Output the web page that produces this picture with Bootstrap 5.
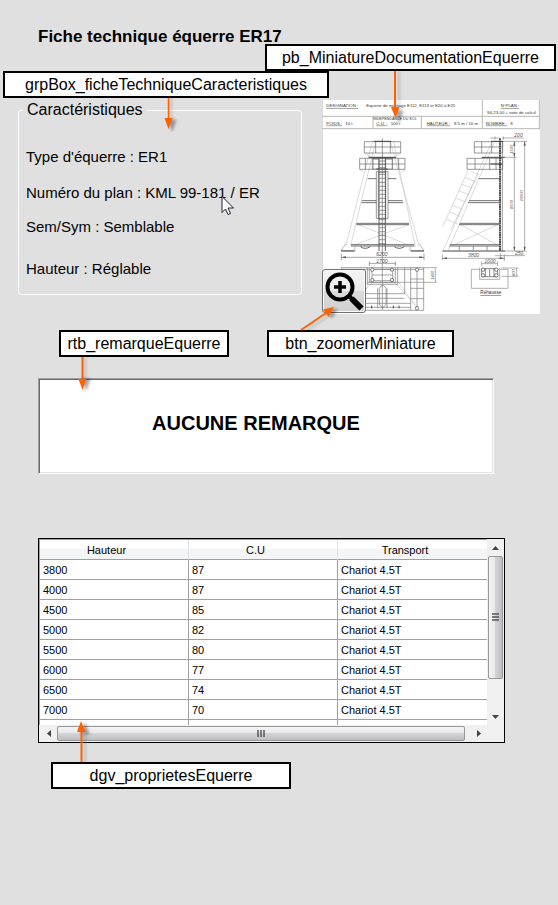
<!DOCTYPE html>
<html lang="fr">
<head>
<meta charset="utf-8">
<meta name="viewport" content="width=device-width, initial-scale=1">
<title>Fiche technique équerre ER17</title>
<link rel="stylesheet" href="https://cdn.jsdelivr.net/npm/bootstrap@5.3.0/dist/css/bootstrap.min.css">
<style>
body{background:#e0e0e0;color:#000;font:15px/20px "Liberation Sans",Arial,sans-serif}
.sheet{padding:25px 18px}
.title{font-size:17px;line-height:24px;font-weight:700;margin:0 0 51px;padding-left:20px}
.details{gap:20px}
.group{border:1px solid #fbfcfe;border-radius:3px;padding:0 7px 15px}
.group legend{float:none;width:auto;font-size:16px;line-height:20px;margin:0 0 0 -3px;padding:0 4px}
.group p{margin:16px 0 0}
.group p.first{margin-top:27px}
.group p.third{margin-top:14px}
.group p.last{margin-top:22px}
.pointer{left:221px;top:195px}
.preview{width:218px;flex:none;margin:0}
.zoomer{left:0;bottom:1px;width:44px;height:44px;border:1px solid #707070;border-radius:3px;background:linear-gradient(#f3f3f3,#ebebeb 50%,#dcdcdc 50%,#cfcfcf);box-shadow:inset 0 0 0 1px #fafafa}
.tag{border:2px solid #000;background:#fff;font-size:16px;line-height:23px;text-align:center;position:relative;white-space:nowrap}
.tag svg{position:absolute;overflow:visible}
.tag-group{position:absolute;left:3px;top:71px;width:326px;z-index:2}
.tag-picture{position:absolute;right:2px;top:44px;width:291px;z-index:2}
.tag-note{width:170px}
.tag-zoom{width:187px}
.tag-grid{width:240px;margin:19px 0 0 33px}
.down{top:100%}
.tags{gap:38px;padding-left:41px;margin-top:16px}
.a-group{left:155px}.a-picture{left:120px}.a-note{left:13px}
.a-zoom{left:24px;bottom:100%}.a-grid{left:20px;bottom:100%}
.note{display:block;width:calc(100% - 66px);height:96px;margin:21px 0 0 20px;border:1px solid;border-color:#a0a0a0 #fff #fff #a0a0a0;box-shadow:inset 1px 1px #696969,inset -1px -1px #e3e3e3;border-radius:0;background:#fff;color:#000;font-size:20px;line-height:24px;font-weight:700;text-align:center;padding:32px 20px 0 0;resize:none;overflow:hidden;outline:0}
.grid-box{margin:64px 35px 0 20px;border:1px solid #000;background:#f0f0f0;font-size:11px}
.viewport{height:186px;overflow:hidden;background:#fff;border-top:1px solid #a0a0a0;border-left:1px solid #a0a0a0}
.data{width:100%;table-layout:fixed;border-collapse:separate;border-spacing:0;line-height:18px}
.data th,.data td{height:20px;padding:1px 3px 0;border-right:1px solid #a0a0a0;border-bottom:1px solid #a0a0a0}
.data th{font-weight:400;text-align:center;padding-right:18px;border-right-color:#e0e2e5;background:linear-gradient(#fff 50%,#f3f4f6 50%,#f5f6f8)}
.data th:last-child,.data td:last-child{border-right:0}
.bar{background:#f0f0f0}
.bar button{border:0;padding:0;background:none;width:17px;height:17px;flex:none;display:flex;align-items:center;justify-content:center}
.vbar{width:17px;flex:none;padding-left:1px}
.bar.vbar button{width:15px}
.vthumb{width:15px;height:123px;border:1px solid #979797;border-radius:2px;background:linear-gradient(90deg,#f5f5f5,#e8e8eb 45%,#d3d4d7 50%,#bdbec1)}
.hthumb{flex:1 1 0;height:15px;border:1px solid #979797;border-radius:2px;background:linear-gradient(#f5f5f5,#e8e8eb 45%,#d3d4d7 50%,#bdbec1)}
.hbar{padding:0 17px 0 1px;height:17px}
.hgap{width:5px}
</style>
<script src="https://cdn.jsdelivr.net/npm/bootstrap@5.3.0/dist/js/bootstrap.bundle.min.js"></script>
</head>
<body>
<main class="sheet position-relative">
  <h1 class="title">Fiche technique équerre ER17</h1>
  <div class="tag tag-picture">pb_MiniatureDocumentationEquerre
    <svg class="down a-picture" width="18" height="52" aria-hidden="true"><g filter="url(#soft)" opacity=".35"><path d="M12 2V42M8 42h8l-4 11z" fill="#000" stroke="#000"/></g><path d="M8 2V40" stroke="#ff6000" stroke-width="2"/><path d="M4 38h8.500L8.500 49z" fill="#ff6000"/></svg>
  </div>
  <div class="tag tag-group">grpBox_ficheTechniqueCaracteristiques
    <svg class="down a-group" width="18" height="36" aria-hidden="true"><defs><filter id="soft" x="-50%" y="-20%" width="200%" height="140%"><feGaussianBlur stdDeviation="1.500"/></filter></defs><g filter="url(#soft)" opacity=".35"><path d="M11 2V24M8 24h8l-4 11z" fill="#000" stroke="#000"/></g><path d="M8.500 2V24" stroke="#ff6000" stroke-width="1.500"/><path d="M4.500 22h8L8.500 33z" fill="#ff6000"/></svg>
  </div>

  <div class="details d-flex align-items-start">
    <fieldset class="group flex-fill">
      <legend>Caractéristiques</legend>
      <p class="first">Type d'équerre : ER1</p>
      <p>Numéro du plan : KML 99-181 / ER</p>
      <p class="third">Sem/Sym : Semblable</p>
      <p class="last">Hauteur : Réglable</p>
    </fieldset>
    <figure class="preview position-relative">
      <svg class="d-block w-100" viewBox="21 15 654 642" role="img" aria-label="Plan de l'équerre de montage" fill="none" stroke="#777" stroke-width="2" font-family="Liberation Sans, Arial, sans-serif">
        <path d="M21 15h654v642H21z" fill="#fff" stroke="none"/>
        <path d="M22 15V657" stroke="#bbb"/>
        <path d="M21 64H675M21 101H675M502 15V101M174 64V101M319 64V101M673 15V101" stroke="#aaa" stroke-width="2.500"/>
        <g fill="#333" stroke="none" font-size="13">
          <text x="34" y="36" text-decoration="underline">DESIGNATION :</text><text x="154" y="36">Equerre de montage E112, E113 et E20 à E25</text>
          <text x="557" y="36" text-decoration="underline">N°PLAN :</text><text x="516" y="56">94-23-00 + note de calcul</text>
          <text x="34" y="89" text-decoration="underline">POIDS :</text><text x="91" y="89">10 t</text>
          <text x="174" y="76" font-size="11">INDEPENDANCE DU SOL</text>
          <text x="184" y="89" text-decoration="underline">C.U. :</text><text x="227" y="89">100 t</text>
          <text x="335" y="89" text-decoration="underline">HAUTEUR :</text><text x="417" y="89">8.5 m / 10 m</text>
          <text x="512" y="89" text-decoration="underline">NOMBRE :</text><text x="586" y="89">8</text>
        </g>
        <!-- front view -->
        <g stroke="#c8c8c8"><path d="M172 140L92 455M182 140L106 455M226 140L313 455M236 140L301 455M134 223l12 10M270 223l-12 10M148 174l20 12M257 174l-20 12M130 389L280 450M280 389L118 450"/></g>
        <g stroke="#666"><path d="M148 140h109v34H148zM134 190h136v33H134zM134 207H270M148 156h109M182 140v34M226 140v34M202 130V480M174 190v33M232 190v33M151 190v33M251 190v33"/>
        <path d="M176 139h53M161 187h82M172 189h62M184 222h34" stroke="#444" stroke-width="3"/>
        <path d="M172 193h20v29h-20zM212 193h20v29h-20z" stroke-width="1.500"/>
        <path d="M184 230h35v141h-35zM190 232h22v138h-22z"/>
        <path d="M192 190v278M211 190v278" stroke="#444" stroke-width="2.500"/>
        <path d="M192 198h19M192 208h19M192 218h19M192 238h19M192 250h19M192 262h19M192 274h19M192 286h19M192 298h19M192 310h19M192 322h19M192 334h19M192 346h19M192 358h19M192 374h19M192 386h19M192 398h19M192 410h19M192 422h19M192 434h19M192 446h19"/>
        <path d="M158 251h26M219 251h25M141 317h43M219 317h44M139 323h45M219 323h46M124 385h158M124 389h158M108 449h190M108 453h190" stroke="#555" stroke-width="2.500"/>
        <path d="M92 446l-14 21h42V454M313 446l14 21h-42V454" stroke="#999"/>
        <path d="M78 468h41M288 468h39" stroke="#444" stroke-width="3"/><path d="M136 455q14 10 30 0M238 455q14 10 30 0" stroke-width="3"/>
        <path d="M79 476v20M327 476v20M79 487H327M163 499v14M241 499v14M163 505h78M202 470v174" stroke="#777"/></g>
        <!-- side view -->
        <g stroke="#c8c8c8"><path d="M528 145L385 465M537 145L400 465M459 227L383 395M490 237L407 405M450 247l32 13M440 267l32 13M431 287l32 13M422 309l32 13M413 331l32 13M404 351l32 13M395 373l32 13M437 389l110 61M548 389l-132 61M468 229l24 10"/></g>
        <g stroke="#666"><path d="M478 140h85v34h-85zM456 190h107v33H456zM456 207H563M478 156h85M500 140v34M530 140v34M480 190v33M524 190v33M543 190v33"/>
        <path d="M528 139h38M500 187h70M526 207h37" stroke="#444" stroke-width="3"/>
        <path d="M555 130V468" stroke="#333" stroke-width="5" stroke-dasharray="6 1"/><path d="M562 140V468"/>
        <path d="M491 251h64M462 317h92M459 323h95M434 385h120M432 389h122M405 449h150M403 453h152" stroke="#555" stroke-width="2.500"/>
        <path d="M382 468h188" stroke="#444" stroke-width="3"/><path d="M433 453v14M475 453v14M516 453v14"/>
        <path d="M526 129h28M562 129h64M540 124v10M565 124v10M598 138V468M629 138V468M570 187h34M566 139h70M570 468h65M382 478v18M382 490h188M568 478v20M540 482h90M556 475v15" stroke="#888"/></g>
        <g fill="#555" stroke="none"><path d="M79 487l14-3v6zM327 487l-14-3v6zM382 490l14-3v6zM568 490l-14-3v6zM598 139l-3 13h6zM598 187l-3-13h6zM598 468l-3-13h6zM629 139l-3 13h6zM629 468l-3-13h6z"/></g>
        <g fill="#555" stroke="none" font-size="15" font-style="italic">
          <text x="184" y="484">6200</text><text x="184" y="503">1700</text><text x="459" y="486">3800</text><text x="598" y="127">200</text><text x="600" y="481">250</text><text x="508" y="503">1000</text>
          <text transform="translate(594 176) rotate(-90)" font-size="12">1500</text><text transform="translate(594 342) rotate(-90)" font-size="12">8500</text><text transform="translate(625 319) rotate(-90)" font-size="12">10000</text><text transform="translate(356 554) rotate(-90)" font-size="12">1400</text><text transform="translate(601 543) rotate(-90)" font-size="12">800</text>
        </g>
        <!-- plan view -->
        <g stroke="#ccc"><path d="M241 565l70 75M170 565l-60 60M250 560l55 80M160 570l-30 60"/></g>
        <g stroke="#777"><path d="M79 518h248M79 523h248M79 518v8M157 518v50h91v-50M163 520v42h78v-42M171 523h62v34h-62zM171 540h62M287 518v128h39V518M287 552h39M287 580h39M287 611h39M306 523v115M269 518v78H150M150 610h118M150 625h137M150 637h137M150 646h137M188 580v60M216 580v60M193 580q10-18 20 0v48q-10 18-20 0zM157 562h91"/>
        <path d="M248 562h118M327 518h39M361 520v42" stroke="#888"/>
        <path d="M170 632v8M235 632v8M252 632v8" stroke="#444" stroke-width="3"/>
        <g fill="#fff" stroke="#444"><circle cx="172" cy="524" r="5"/><circle cx="231" cy="524" r="5"/><circle cx="172" cy="555" r="5"/><circle cx="231" cy="555" r="5"/><circle cx="306" cy="524" r="5"/><circle cx="306" cy="640" r="5"/></g></g>
        <!-- riser -->
        <g stroke="#888"><path d="M494 523h-25v57h110v-57h-25M494 518v35h60v-35M500 499v14M548 499v14M500 506h48M560 519h50M560 544h50M605 519v25"/><path d="M500 521h48v24h-48zM511 521v24M537 521v24M524 523v20" stroke="#444"/><g fill="#fff" stroke="#444"><circle cx="504" cy="524" r="5"/><circle cx="544" cy="524" r="5"/><circle cx="504" cy="541" r="5"/><circle cx="544" cy="541" r="5"/></g></g>
        <text x="496" y="598" font-size="14" fill="#333" stroke="none" text-decoration="underline">Réhausse</text>
      </svg>
      <button class="zoomer position-absolute p-0 d-flex align-items-center justify-content-center" type="button" aria-label="Zoomer la miniature">
        <svg width="40" height="40" viewBox="0 0 40 40" fill="none" stroke="#000"><circle cx="16" cy="16" r="12.500" stroke-width="4"/><path d="M16 10v12M10 16h12" stroke-width="3.500"/><path d="M25 25l3 3" stroke-width="4"/><path d="M27.500 27.500l10 10" stroke-width="6"/></svg>
      </button>
    </figure>
  </div>

  <div class="tags d-flex">
    <div class="tag tag-note">rtb_remarqueEquerre
      <svg class="down a-note" width="18" height="36" aria-hidden="true"><g filter="url(#soft)" opacity=".35"><path d="M11 2V24M8 24h8l-4 11z" fill="#000" stroke="#000"/></g><path d="M8.500 2V24" stroke="#ff6000" stroke-width="2"/><path d="M4.500 24h8L8.500 35z" fill="#ff6000"/></svg>
    </div>
    <div class="tag tag-zoom">btn_zoomerMiniature
      <svg class="a-zoom" width="46" height="28" aria-hidden="true"><g filter="url(#soft)" opacity=".35"><path d="M12 28L38 10M34 7l5 7 5-9z" fill="#000" stroke="#000"/></g><path d="M8 26L33 9" stroke="#ff6000" stroke-width="2"/><path d="M30 5.500l5.500 7.500L41 3z" fill="#ff6000"/></svg>
    </div>
  </div>

  <textarea class="note" readonly aria-label="Remarque">AUCUNE REMARQUE</textarea>

  <div class="grid-box">
    <div class="d-flex">
      <div class="viewport flex-fill">
        <table class="data">
          <thead><tr><th scope="col">Hauteur</th><th scope="col">C.U</th><th scope="col">Transport</th></tr></thead>
          <tbody>
            <tr><td>3800</td><td>87</td><td>Chariot 4.5T</td></tr>
            <tr><td>4000</td><td>87</td><td>Chariot 4.5T</td></tr>
            <tr><td>4500</td><td>85</td><td>Chariot 4.5T</td></tr>
            <tr><td>5000</td><td>82</td><td>Chariot 4.5T</td></tr>
            <tr><td>5500</td><td>80</td><td>Chariot 4.5T</td></tr>
            <tr><td>6000</td><td>77</td><td>Chariot 4.5T</td></tr>
            <tr><td>6500</td><td>74</td><td>Chariot 4.5T</td></tr>
            <tr><td>7000</td><td>70</td><td>Chariot 4.5T</td></tr>
            <tr><td></td><td></td><td></td></tr>
          </tbody>
        </table>
      </div>
      <div class="bar vbar d-flex flex-column justify-content-between">
        <div>
          <button type="button" aria-label="Monter"><svg width="7" height="4"><path d="M0 4l3.500-4L7 4z" fill="#444"/></svg></button>
          <div class="vthumb d-flex align-items-center justify-content-center"><svg width="7" height="9"><path d="M0 1h7M0 4h7M0 7h7" stroke="#555" stroke-width="1.500"/></svg></div>
        </div>
        <button type="button" aria-label="Descendre"><svg width="7" height="4"><path d="M0 0h7L3.500 4z" fill="#444"/></svg></button>
      </div>
    </div>
    <div class="bar hbar d-flex align-items-center">
      <button type="button" aria-label="Gauche"><svg width="4" height="7"><path d="M4 0v7L0 3.500z" fill="#444"/></svg></button>
      <div class="hthumb d-flex align-items-center justify-content-center"><svg width="9" height="7"><path d="M1 0v7M4 0v7M7 0v7" stroke="#555" stroke-width="1.500"/></svg></div>
      <span class="hgap"></span>
      <button type="button" aria-label="Droite"><svg width="4" height="7"><path d="M0 0v7l4-3.500z" fill="#444"/></svg></button>
    </div>
  </div>

  <div class="tag tag-grid">dgv_proprietesEquerre
    <svg class="a-grid" width="18" height="46" aria-hidden="true"><g filter="url(#soft)" opacity=".35"><path d="M12 46V16M8 16h8L12 5z" fill="#000" stroke="#000"/></g><path d="M8.500 44V12" stroke="#ff6000" stroke-width="2"/><path d="M4 14h8.500L8 3z" fill="#ff6000"/></svg>
  </div>

  <svg class="pointer position-absolute" width="14" height="21" viewBox="0 0 14 21" aria-hidden="true"><path d="M1 1.500v16l3.500-3.500L7 19.500l2.500-1L7 13h5.500z" fill="#fff" stroke="#223" stroke-width="1"/></svg>
</main>
</body>
</html>
